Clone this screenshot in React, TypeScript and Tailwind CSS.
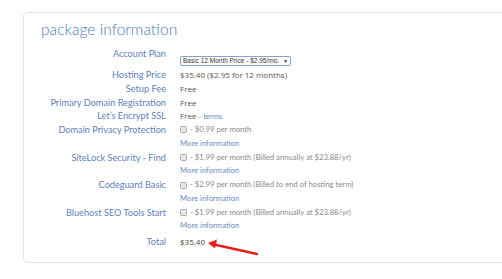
import React from "react";

type Row = {
  label: string;
  value?: React.ReactNode;
  extra?: boolean;
};

const lato = { fontFamily: "Lato, 'Open Sans', sans-serif" };

function Check() {
  return (
    <span className="inline-block w-[7px] h-[7px] shrink-0 rounded-[1.5px] border border-[#a9a9a9] bg-[#e8e8e8] mr-[3px]" />
  );
}

function Addon({ text }: { text: string }) {
  return (
    <span className="flex items-center text-[#8a8a8a] font-[Lato] text-[7.7px]">
      <Check />- {text}
    </span>
  );
}

const plain = "text-[#555] font-['Open_Sans'] text-[8px]";

const rows: Row[] = [
  { label: "Hosting Price", value: <span className={plain}>$35.40 ($2.95 for 12 months)</span> },
  { label: "Setup Fee", value: <span className={plain}>Free</span> },
  { label: "Primary Domain Registration", value: <span className={plain}>Free</span> },
  {
    label: "Let’s Encrypt SSL",
    value: (
      <span className={plain}>
        Free <span className="text-[#8a8a8a]">-</span>{" "}
        <span className="text-[#6b8bc4] font-[Lato] text-[7.7px]">terms</span>
      </span>
    ),
  },
  { label: "Domain Privacy Protection", value: <Addon text="$0.99 per month" />, extra: true },
  { label: "SiteLock Security - Find", value: <Addon text="$1.99 per month (Billed annually at $23.88/yr)" />, extra: true },
  { label: "Codeguard Basic", value: <Addon text="$2.99 per month (Billed to end of hosting term)" />, extra: true },
  { label: "Bluehost SEO Tools Start", value: <Addon text="$1.99 per month (Billed annually at $23.88/yr)" />, extra: true },
];

export default function App() {
  return (
    <div className="w-[502px] h-[279px] overflow-hidden bg-white relative" style={lato}>
      <div className="mt-[12px] ml-[23px] w-[520px] h-[251px] border border-[#dde5ef] rounded-[4px] pl-[17px] pt-[3px]">
        <h2 className="text-[15.6px] font-light leading-[26px] text-[#4f78b8] font-[Lato]">package information</h2>

        <div className="mt-[5px] grid grid-cols-[125px_1fr] gap-x-[14px] text-[9.2px] leading-[13.77px]">
          {/* account plan */}
          <div className="text-right text-[#5f80ba] h-[21px]">Account Plan</div>
          <div className="pt-[9px] h-[21px]">
            <div className="flex items-center h-[10px] w-[111px] border border-[#86a2cc] rounded-[2px] px-[2px] text-[6.5px] leading-[8px] text-[#333] font-['Liberation_Sans'] whitespace-nowrap">
              <span>Basic 12 Month Price - $2.95/mo.</span>
              <span className="ml-auto text-[5px]">▼</span>
            </div>
          </div>

          {rows.map((r) => (
            <React.Fragment key={r.label}>
              <div className="text-right text-[#5f80ba] whitespace-nowrap h-[13.77px]">{r.label}</div>
              <div className="whitespace-nowrap">
                <div className="flex items-center h-[13.77px]">{r.value}</div>
                {r.extra && (
                  <div className="flex items-center h-[13.77px] text-[#6b8bc4] text-[7.7px]">More information</div>
                )}
              </div>
            </React.Fragment>
          ))}

          <div className="text-right text-[#5f80ba] mt-[2px] h-[13.77px]">Total</div>
          <div className="flex items-center h-[13.77px] text-[#444] font-['Open_Sans'] text-[8px] mt-[2px]">$35.40</div>
        </div>
      </div>

      {/* red annotation arrow */}
      <svg className="absolute left-[200px] top-[236px]" width="64" height="24" viewBox="0 0 64 24">
        <line x1="57" y1="18" x2="14" y2="8.5" stroke="#e4201b" strokeWidth="2.4" strokeLinecap="round" />
        <polygon points="8,7 17,3.5 15,12.5" fill="#e4201b" />
      </svg>
    </div>
  );
}
